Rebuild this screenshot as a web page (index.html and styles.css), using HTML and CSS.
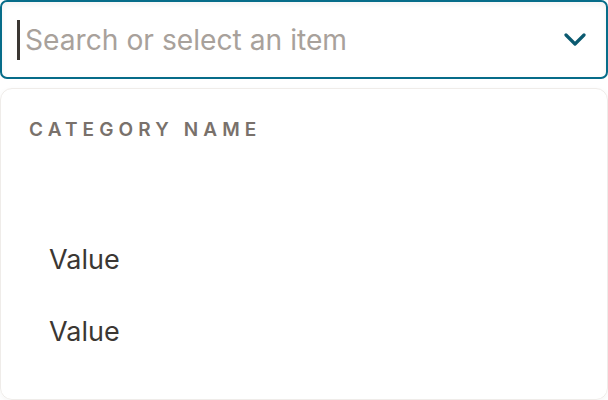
FILE: index.html
```html
<!DOCTYPE html>
<html lang="en">
<head>
    <meta charset="UTF-8">
    <title>Combobox</title>
    <link rel="stylesheet" href="styles.css">
</head>
<body>
    <div class="combo">
        <div class="combo-input">
            <span class="caret"></span>
            <span class="placeholder">Search or select an item</span>
            <svg class="chevron" width="22" height="14" viewBox="0 0 22 14">
                <path d="M2 2 L11 11 L20 2" fill="none" stroke="#0b5a70" stroke-width="3.2" stroke-linecap="round" stroke-linejoin="round"/>
            </svg>
        </div>

        <div class="combo-panel">
            <div class="category">Category Name</div>
            <div class="option-list">
                <div class="option">Value</div>
                <div class="option">Value</div>
            </div>
        </div>
    </div>
</body>
</html>
```

FILE: styles.css
```css
* {
    margin: 0;
    padding: 0;
    box-sizing: border-box;
}

body {
    font-family: 'Inter', 'Noto Sans', sans-serif;
    background: #fff;
    width: 608px;
    height: 400px;
    overflow: hidden;
}

.combo {
    display: flex;
    flex-direction: column;
    gap: 9px;
}

.combo-input {
    height: 79px;
    border: 2px solid #066c89;
    border-radius: 7px;
    display: flex;
    align-items: center;
    padding: 0 20px 0 15px;
    box-shadow: inset 0 3px 6px rgba(0, 0, 0, 0.05);
}

.caret {
    width: 3px;
    height: 40px;
    background: #3b3733;
    margin-right: 5px;
}

.placeholder {
    flex: 1;
    font-size: 28.2px;
    color: #a8a19b;
}

.chevron {
    display: block;
}

.combo-panel {
    height: 312px;
    border: 1px solid #efece9;
    border-radius: 12px;
    box-shadow: 0 2px 6px rgba(0, 0, 0, 0.04);
    padding: 30px 28px 0;
}

.category {
    font-size: 19px;
    font-weight: 600;
    letter-spacing: 5.1px;
    text-transform: uppercase;
    color: #79716b;
    line-height: 22px;
}

.option-list {
    display: flex;
    flex-direction: column;
    margin-top: 83px;
    padding-left: 20px;
}

.option {
    font-size: 27px;
    color: #3b3733;
    line-height: 72px;
}
```
